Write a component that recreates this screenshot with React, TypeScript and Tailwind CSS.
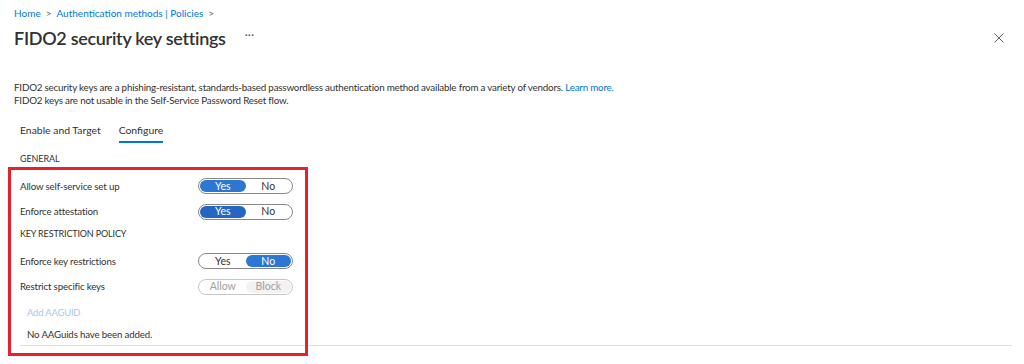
import React from "react";

type Seg = { label: string; on: boolean };

function Toggle({ segs, disabled = false, dark = false }: { segs: Seg[]; disabled?: boolean; dark?: boolean }) {
  return (
    <div
      className={`flex h-[16px] w-[95px] items-stretch rounded-full border p-[1px] ${
        disabled ? "border-[#c8c6c4]" : "border-[#8a8886]"
      }`}
    >
      {segs.map((s) => (
        <div
          key={s.label}
          className={`flex flex-1 items-center justify-center rounded-full text-[10.5px] leading-none ${
            disabled
              ? s.on
                ? "bg-[#f3f2f1] text-[#a19f9d]"
                : "text-[#a19f9d]"
              : s.on
              ? dark
                ? "bg-[#2566c4] text-white"
                : "bg-[#2b77d3] text-white"
              : "text-[#323130]"
          }`}
        >
          {s.label}
        </div>
      ))}
    </div>
  );
}

function Row({ label, children, h }: { label: string; children: React.ReactNode; h: string }) {
  return (
    <div className={`flex items-center ${h}`}>
      <div className="w-[178px] text-[9.7px] tracking-[-0.15px] text-[#323130]">{label}</div>
      {children}
    </div>
  );
}

export default function App() {
  return (
    <div
      className="relative h-[364px] w-[1024px] overflow-hidden bg-white text-[#323130]"
      style={{ fontFamily: 'Lato, "Open Sans", sans-serif' }}
    >
      <div className="px-[14px]">
        {/* breadcrumb */}
        <div className="flex h-[26px] items-center gap-[5px] text-[10px] text-[#0078d4]">
          <span>Home</span>
          <span className="text-[#605e5c]">&gt;</span>
          <span>Authentication methods | Policies</span>
          <span className="text-[#605e5c]">&gt;</span>
        </div>
        {/* title */}
        <div className="flex h-[24px] items-center">
          <h1 className="text-[18px] font-semibold leading-none tracking-[-0.3px] text-[#323130]">
            FIDO2 security key settings
          </h1>
          <span className="relative top-[-3px] ml-[19px] text-[12px] leading-none text-[#605e5c]">···</span>
          <div className="flex-1" />
          <svg width="10" height="10" viewBox="0 0 10 10" className="mr-[6px]">
            <path d="M0.5 0.5 L9.5 9.5 M9.5 0.5 L0.5 9.5" stroke="#605e5c" strokeWidth="1" />
          </svg>
        </div>
        {/* description */}
        <div className="mt-[31px] text-[9.8px] leading-[13px] tracking-[-0.2px] text-[#323130]">
          <div>
            FIDO2 security keys are a phishing-resistant, standards-based passwordless authentication method available
            from a variety of vendors. <span className="text-[#0078d4]">Learn more.</span>
          </div>
          <div>FIDO2 keys are not usable in the Self-Service Password Reset flow.</div>
        </div>
      </div>

      <div className="pl-[20px] pr-[12px]">
        {/* tabs */}
        <div className="mt-[14px] flex gap-[18px] text-[10.4px]">
          <div className="flex flex-col">
            <div className="flex h-[20px] items-center">Enable and Target</div>
            <div className="h-[2px]" />
          </div>
          <div className="flex flex-col">
            <div className="flex h-[20px] items-center">Configure</div>
            <div className="h-[2px] bg-[#0078d4]" />
          </div>
        </div>

        <div className="mt-[8px] flex h-[16px] items-center text-[9px] tracking-[-0.1px]">GENERAL</div>

        <div className="mt-[6px]">
          <Row label="Allow self-service set up" h="h-[26px]">
            <Toggle segs={[{ label: "Yes", on: true }, { label: "No", on: false }]} />
          </Row>
          <Row label="Enforce attestation" h="h-[25px]">
            <Toggle segs={[{ label: "Yes", on: true }, { label: "No", on: false }]} dark />
          </Row>
        </div>

        <div className="flex h-[20px] items-center text-[9px] tracking-[-0.15px]">KEY RESTRICTION POLICY</div>

        <div className="mt-[4px]">
          <Row label="Enforce key restrictions" h="h-[26px]">
            <Toggle segs={[{ label: "Yes", on: false }, { label: "No", on: true }]} />
          </Row>
          <Row label="Restrict specific keys" h="h-[25px]">
            <Toggle segs={[{ label: "Allow", on: false }, { label: "Block", on: true }]} disabled />
          </Row>
        </div>

        <div className="mt-[4px] flex h-[20px] items-center pl-[7px] text-[9.4px] tracking-[-0.15px] text-[#a6c8ee]">
          Add AAGUID
        </div>
        <div className="mt-[1px] flex h-[20px] items-center pl-[7px] text-[9.7px] tracking-[-0.15px]">
          No AAGuids have been added.
        </div>
        <div className="mt-[1px] h-[1px] bg-[#e1dfdd]" />
      </div>

      {/* red annotation box */}
      <div className="pointer-events-none absolute left-[8px] top-[167px] h-[189px] w-[300px] border-[3px] border-[#e3222e]" />
    </div>
  );
}
